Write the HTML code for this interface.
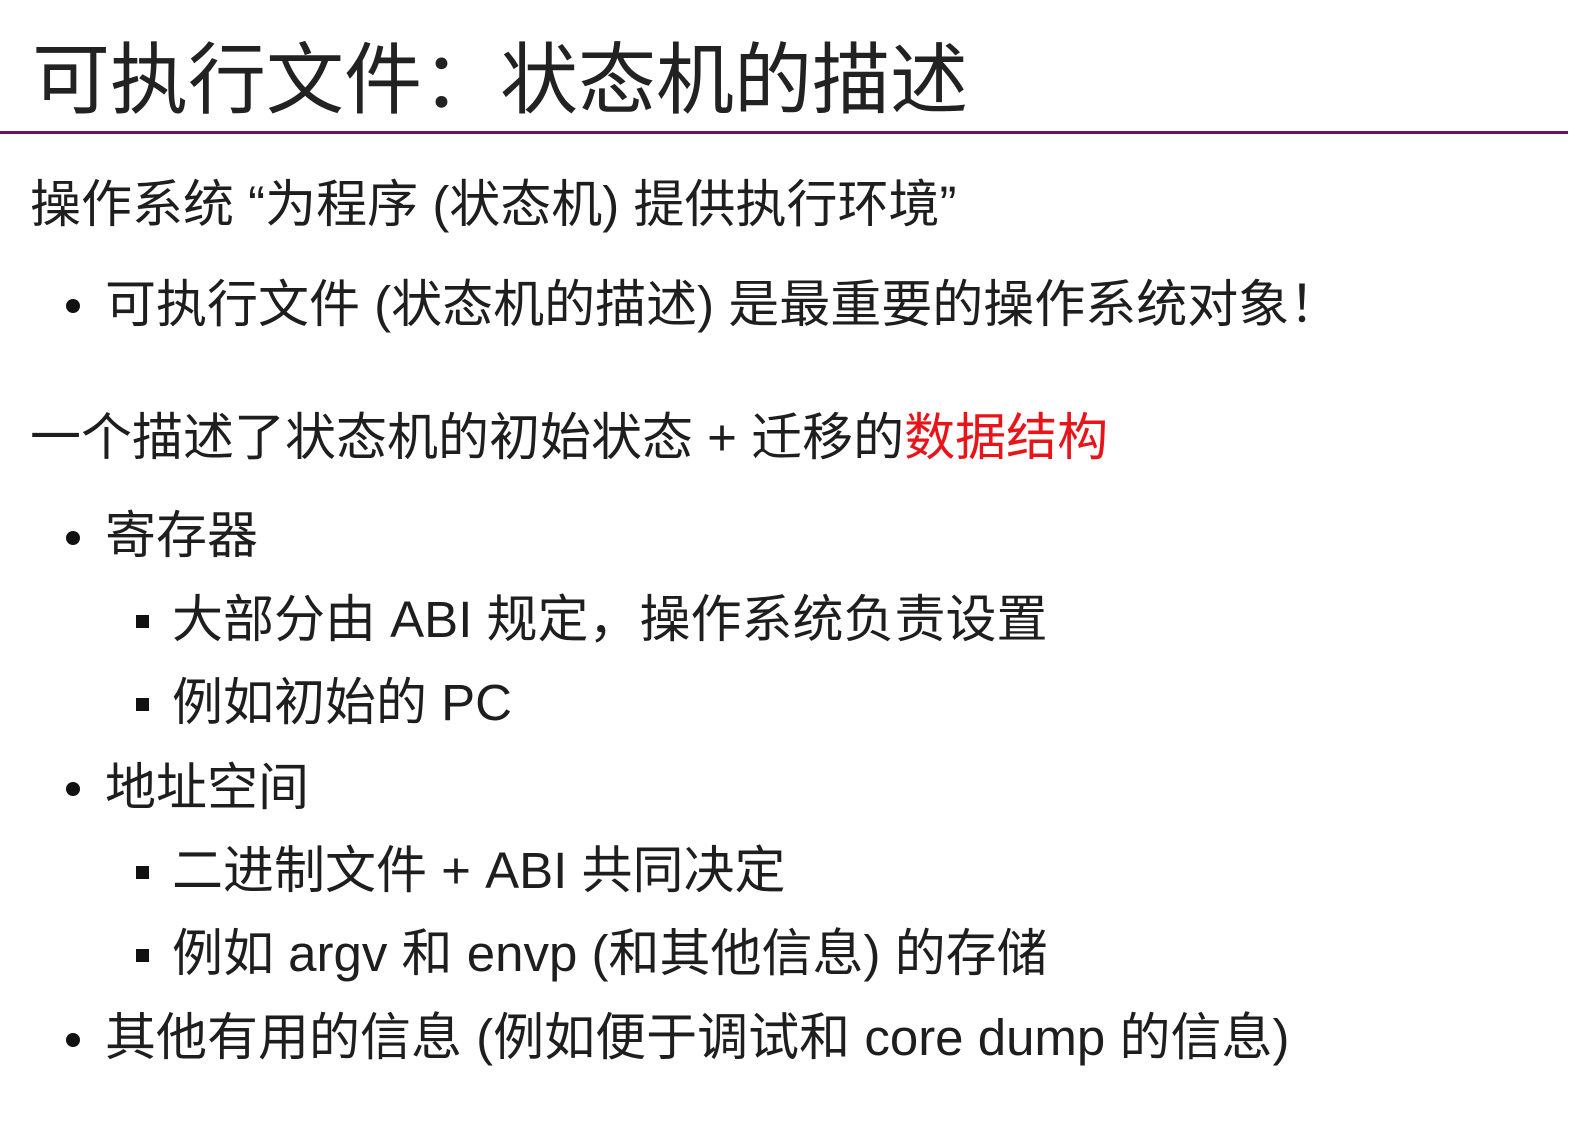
<!DOCTYPE html>
<html><head><meta charset="utf-8"><style>
html,body{margin:0;padding:0;background:#fff;}
body{width:1576px;height:1121px;position:relative;overflow:hidden;font-family:"Liberation Sans","Noto Sans CJK SC",sans-serif;color:#1e1e1e;}
.t{position:absolute;left:32px;top:34px;font-size:78px;line-height:92px;white-space:nowrap;color:#222;}
.rule{position:absolute;left:0;top:131px;width:1568px;height:3px;background:#6b1262;}
.l{position:absolute;font-size:51px;line-height:60px;white-space:nowrap;}
.d{position:absolute;width:14px;height:14px;border-radius:50%;background:#111;}
.s{position:absolute;width:13px;height:13px;background:#111;}
.r{color:#e8141a;}
</style></head><body>
<div class="t">可执行文件：状态机的描述</div>
<div class="rule"></div>
<div class="l" style="left:30px;top:175px">操作系统 “为程序 (状态机) 提供执行环境”</div>
<div class="d" style="left:66px;top:299px"></div>
<div class="l" style="left:105px;top:275px">可执行文件 (状态机的描述) 是最重要的操作系统对象！</div>
<div class="l" style="left:30px;top:408px">一个描述了状态机的初始状态 + 迁移的<span class="r">数据结构</span></div>
<div class="d" style="left:66px;top:531px"></div>
<div class="l" style="left:105px;top:506px">寄存器</div>
<div class="s" style="left:136px;top:615px"></div>
<div class="l" style="left:172px;top:590px">大部分由 ABI 规定，操作系统负责设置</div>
<div class="s" style="left:136px;top:698px"></div>
<div class="l" style="left:172px;top:673px">例如初始的 PC</div>
<div class="d" style="left:66px;top:782px"></div>
<div class="l" style="left:105px;top:758px">地址空间</div>
<div class="s" style="left:136px;top:866px"></div>
<div class="l" style="left:172px;top:841px">二进制文件 + ABI 共同决定</div>
<div class="s" style="left:136px;top:949px"></div>
<div class="l" style="left:172px;top:924px">例如 argv 和 envp (和其他信息) 的存储</div>
<div class="d" style="left:66px;top:1033px"></div>
<div class="l" style="left:105px;top:1008px">其他有用的信息 (例如便于调试和 core dump 的信息)</div>
</body></html>
